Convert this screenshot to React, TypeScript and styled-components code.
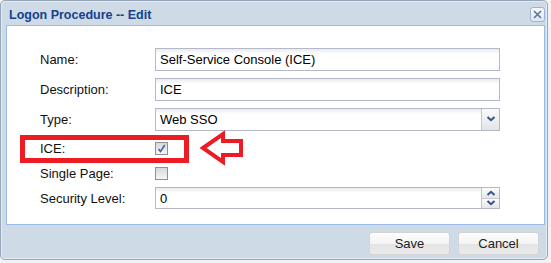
import React from "react";
import styled, { createGlobalStyle } from "styled-components";

const GlobalStyle = createGlobalStyle`
  html, body {
    margin: 0;
    padding: 0;
    background: #f2f2f2;
  }
  body {
    font-family: "Liberation Sans", Arial, sans-serif;
  }
`;

const Window = styled.div`
  position: relative;
  box-sizing: border-box;
  width: 548px;
  height: 260px;
  background: #cfdae7;
  border: 1px solid #97a5b8;
  border-radius: 5px;
  box-shadow: inset 0 0 0 1px #e3ebf5;
  padding: 0 2px 0 5px;
  display: flex;
  flex-direction: column;
`;

const Header = styled.div`
  height: 24px;
  display: flex;
  align-items: center;
  justify-content: space-between;
  padding: 3px 0 0 3px;
  box-sizing: border-box;
`;

const Title = styled.span`
  font-size: 12.5px;
  font-weight: bold;
  color: #15428b;
`;

const CloseButton = styled.div`
  box-sizing: border-box;
  width: 15px;
  height: 15px;
  border: 1px solid #9bb4d6;
  border-radius: 3px;
  background: linear-gradient(#f4f8fc, #dfe8f3);
  display: flex;
  align-items: center;
  justify-content: center;
`;

const Body = styled.div`
  box-sizing: border-box;
  height: 200px;
  background: #fff;
  border: 1px solid #99bbe8;
  padding: 18px 0 0 33px;
  display: flex;
  flex-direction: column;
`;

const Row = styled.div<{ $h: number }>`
  height: ${({ $h }) => $h}px;
  display: flex;
  align-items: center;
`;

const Label = styled.div`
  width: 115px;
  font-size: 13px;
  color: #111;
`;

const Field = styled.div<{ $h?: number; $trigger?: boolean }>`
  box-sizing: border-box;
  width: 345px;
  height: ${({ $h }) => $h ?? 23}px;
  border: 1px solid #b5b8c8;
  background: linear-gradient(#e9ebef, #ffffff 5px);
  padding: ${({ $trigger }) => ($trigger ? "0 0 0 4px" : "0 4px")};
  display: flex;
  align-items: center;
  font-size: 13px;
  color: #000;
`;

const FieldText = styled.span`
  flex: 1;
`;

const Trigger = styled.div`
  box-sizing: border-box;
  width: 18px;
  height: 100%;
  border-left: 1px solid #c3c6d2;
  background: linear-gradient(#fbfbfb, #e2e4e8);
  display: flex;
  align-items: center;
  justify-content: center;
`;

const Spinner = styled.div`
  box-sizing: border-box;
  width: 18px;
  height: 100%;
  border-left: 1px solid #c3c6d2;
  display: flex;
  flex-direction: column;
`;

const SpinHalf = styled.div<{ $down?: boolean }>`
  flex: 1;
  display: flex;
  align-items: center;
  justify-content: center;
  background: linear-gradient(#fbfbfb, #e4e6ea);
  border-top: ${({ $down }) => ($down ? "1px solid #c9ccd6" : "none")};
`;

const CheckBox = styled.div`
  box-sizing: border-box;
  width: 13px;
  height: 13px;
  border: 1px solid #8f9092;
  background: linear-gradient(#d6d8dc, #f6f6f6);
  display: flex;
  align-items: center;
  justify-content: center;
`;

const Footer = styled.div`
  flex: 1;
  display: flex;
  justify-content: flex-end;
  align-items: flex-start;
  gap: 8px;
  padding: 7px 6px 0 0;
`;

const Button = styled.div`
  box-sizing: border-box;
  width: 81px;
  height: 23px;
  border: 1px solid #d2d4d8;
  border-radius: 3px;
  background: linear-gradient(#fdfdfd 0%, #f4f4f4 50%, #e4e4e4 51%, #ebebeb 100%);
  display: flex;
  align-items: center;
  justify-content: center;
  font-size: 13px;
  color: #222;
`;

const Highlight = styled.div`
  position: absolute;
  left: 19px;
  top: 134px;
  width: 169px;
  height: 28px;
  box-sizing: border-box;
  border: 5px solid #ed1c24;
`;

const ArrowMark = styled.svg`
  position: absolute;
  left: 198px;
  top: 129px;
`;

const Chevron = ({ up }: { up?: boolean }) => (
  <svg width="10" height="6" viewBox="0 0 10 6">
    <path
      d={up ? "M1.5 5 L5 1.8 L8.5 5" : "M1.5 1 L5 4.2 L8.5 1"}
      fill="none"
      stroke="#34558a"
      strokeWidth="2"
    />
  </svg>
);

const App = () => {
  return (
    <>
      <GlobalStyle />
      <Window>
        <Header>
          <Title>Logon Procedure -- Edit</Title>
          <CloseButton>
            <svg width="9" height="9" viewBox="0 0 9 9">
              <path d="M1 1 L8 8 M8 1 L1 8" stroke="#5f7498" strokeWidth="1.6" />
            </svg>
          </CloseButton>
        </Header>
        <Body>
          <Row $h={30}>
            <Label>Name:</Label>
            <Field>Self-Service Console (ICE)</Field>
          </Row>
          <Row $h={30}>
            <Label>Description:</Label>
            <Field>ICE</Field>
          </Row>
          <Row $h={30}>
            <Label>Type:</Label>
            <Field $trigger>
              <FieldText>Web SSO</FieldText>
              <Trigger>
                <Chevron />
              </Trigger>
            </Field>
          </Row>
          <Row $h={28}>
            <Label>ICE:</Label>
            <CheckBox>
              <svg width="9" height="9" viewBox="0 0 9 9">
                <path d="M1.5 5 L3.5 7.5 L7.8 1" fill="none" stroke="#4a5f9e" strokeWidth="1.6" />
              </svg>
            </CheckBox>
          </Row>
          <Row $h={22}>
            <Label>Single Page:</Label>
            <CheckBox />
          </Row>
          <Row $h={28}>
            <Label>Security Level:</Label>
            <Field $h={22} $trigger>
              <FieldText>0</FieldText>
              <Spinner>
                <SpinHalf>
                  <Chevron up />
                </SpinHalf>
                <SpinHalf $down>
                  <Chevron />
                </SpinHalf>
              </Spinner>
            </Field>
          </Row>
        </Body>
        <Footer>
          <Button>Save</Button>
          <Button>Cancel</Button>
        </Footer>
        <Highlight />
        <ArrowMark width="48" height="38" viewBox="0 0 48 38">
          <polygon
            points="4,18 24,4 24,11 42,11 42,25 24,25 24,32"
            fill="none"
            stroke="#ed1c24"
            strokeWidth="4"
            strokeLinejoin="miter"
            strokeMiterlimit="3"
          />
        </ArrowMark>
      </Window>
    </>
  );
};

export default App;
